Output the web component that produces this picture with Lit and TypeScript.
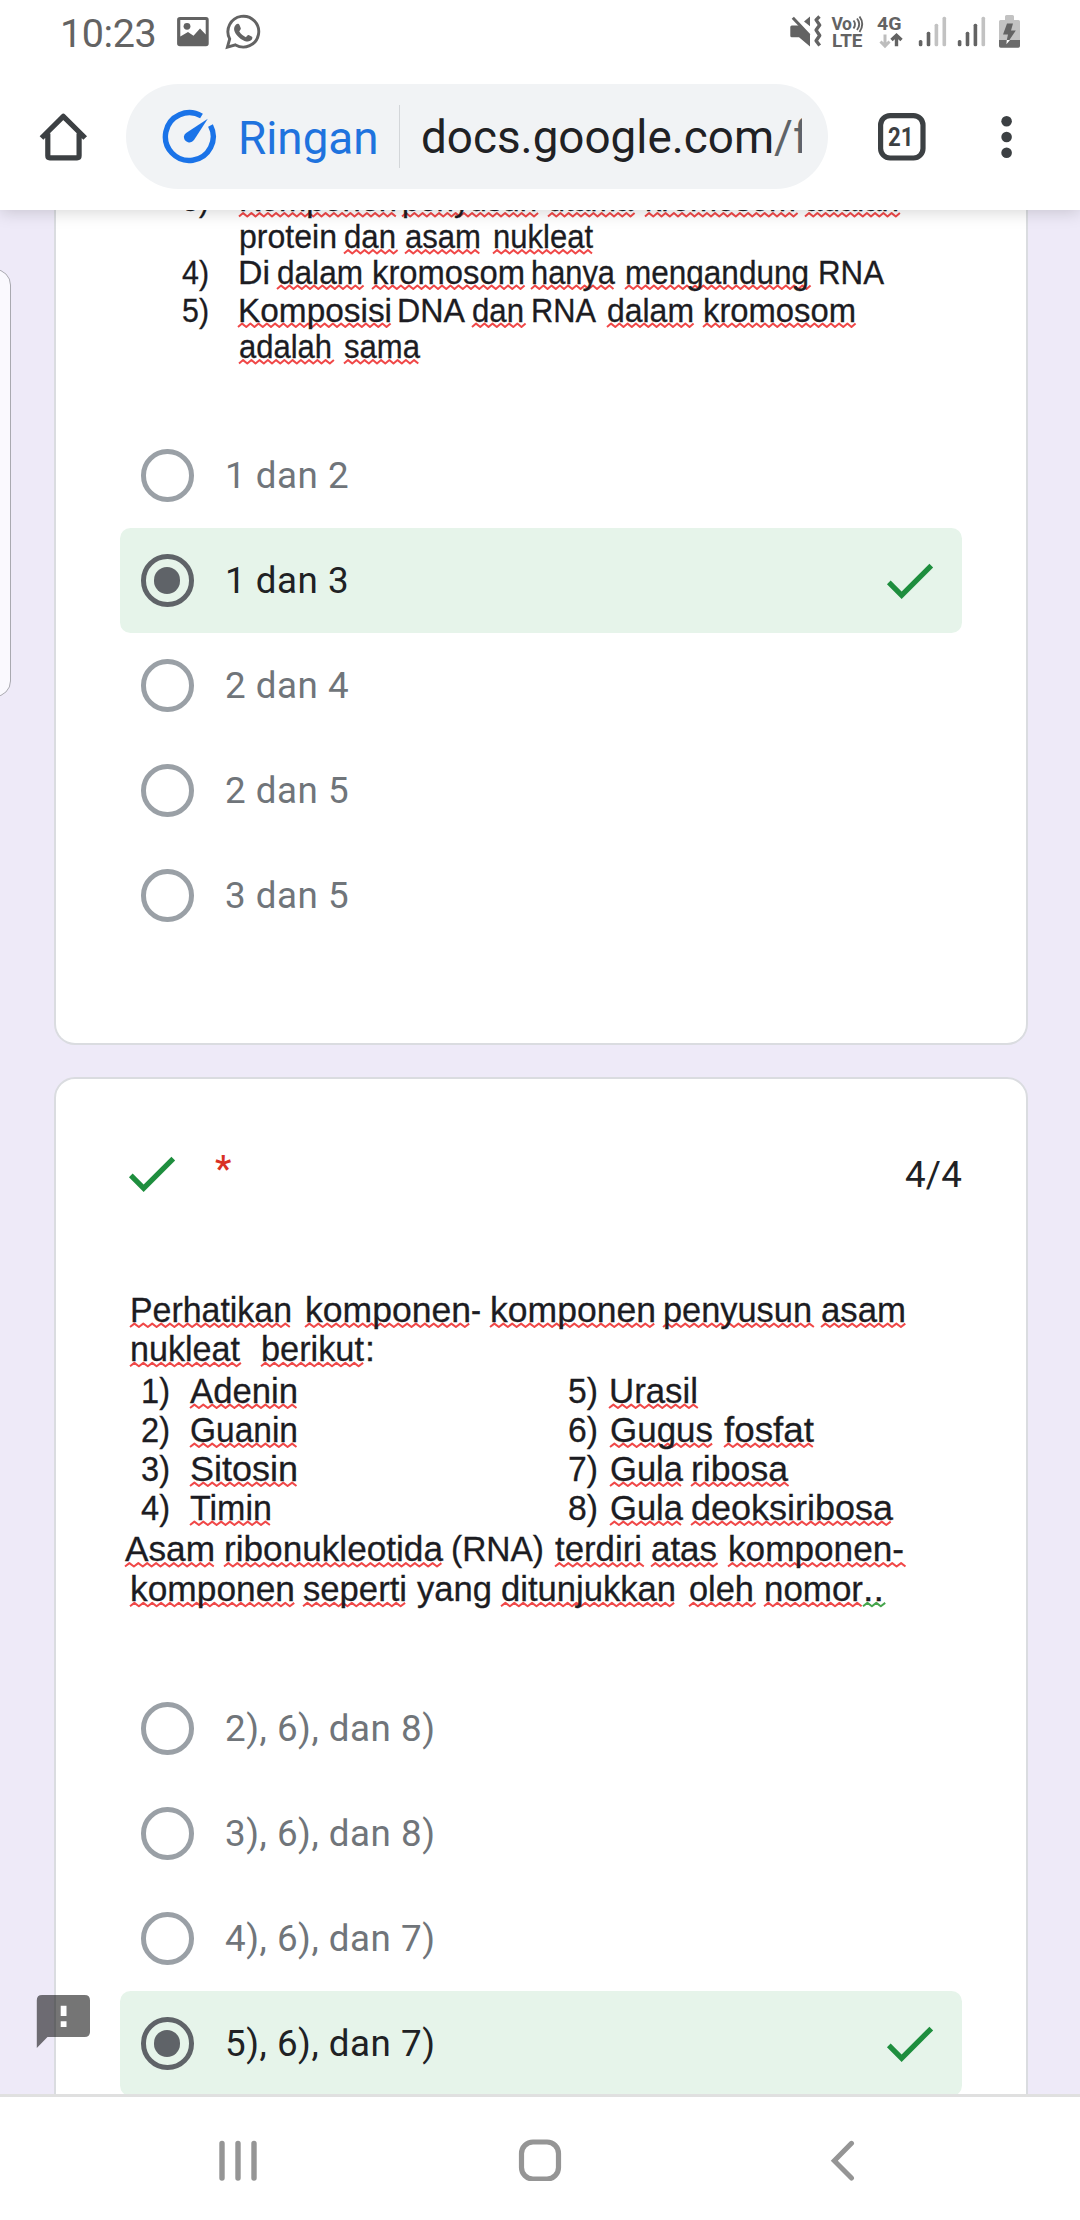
import { LitElement, html, svg, css, nothing } from "lit";
import { customElement, property } from "lit/decorators.js";

type Mark = "" | "r" | "g";
/** x start, x end, text, proofing underline */
type Word = [number, number, string, Mark?];
interface Line {
  y: number;
  words: Word[];
}
interface Option {
  label: string;
  chosen?: boolean;
}

const CHROMOSOME: Line[] = [
  { y: 211, words: [[182, 209, "3)"], [239, 397, "Komponen", "r"], [402, 537, "penyusun", "r"], [548, 633, "utama", "r"], [645, 796, "kromosom", "r"], [805, 899, "adalah", "r"]] },
  { y: 248, words: [[239, 337, "protein"], [344, 396, "dan", "r"], [405, 481, "asam", "r"], [493, 593, "nukleat", "r"]] },
  { y: 283.5, words: [[182, 209, "4)"], [238, 270, "Di"], [277, 363, "dalam", "r"], [372, 525, "kromosom", "r"], [531, 615, "hanya", "r"], [625, 809, "mengandung", "r"], [818, 884, "RNA"]] },
  { y: 321.5, words: [[182, 209, "5)"], [238, 392, "Komposisi", "r"], [397, 465, "DNA"], [472, 524, "dan", "r"], [531, 596, "RNA"], [607, 694, "dalam", "r"], [703, 856, "kromosom", "r"]] },
  { y: 358, words: [[239, 332, "adalah", "r"], [344, 420, "sama", "r"]] },
];

const NUCLEIC: Line[] = [
  { y: 1321.5, words: [[130, 292, "Perhatikan", "r"], [305, 471, "komponen", "r"], [471, 481, "-"], [490, 656, "komponen", "r"], [663, 812, "penyusun", "r"], [821, 906, "asam", "r"]] },
  { y: 1360.8, words: [[130, 240, "nukleat", "r"], [261, 364, "berikut", "r"], [365, 375, ":"]] },
  { y: 1402.5, words: [[141, 170, "1)"], [190, 298, "Adenin", "r"], [568, 598, "5)"], [609, 698, "Urasil", "r"]] },
  { y: 1441.5, words: [[141, 170, "2)"], [190, 298, "Guanin", "r"], [568, 598, "6)"], [610, 713, "Gugus", "r"], [724, 814, "fosfat", "r"]] },
  { y: 1480.5, words: [[141, 170, "3)"], [190, 298, "Sitosin", "r"], [568, 598, "7)"], [610, 683, "Gula", "r"], [691, 788, "ribosa", "r"]] },
  { y: 1519.5, words: [[141, 170, "4)"], [190, 272, "Timin", "r"], [568, 598, "8)"], [610, 683, "Gula", "r"], [691, 893, "deoksiribosa", "r"]] },
  { y: 1561, words: [[125, 215, "Asam", "r"], [224, 443, "ribonukleotida", "r"], [451, 544, "(RNA)"], [555, 642, "terdiri", "r"], [651, 717, "atas", "r"], [728, 904, "komponen-", "r"]] },
  { y: 1600.8, words: [[130, 295, "komponen", "r"], [303, 407, "seperti", "r"], [417, 492, "yang"], [501, 676, "ditunjukkan", "r"], [689, 754, "oleh", "r"], [764, 863, "nomor", "r"], [863, 884, "..", "g"]] },
];

const FIRST: Option[] = [
  { label: "1 dan 2" },
  { label: "1 dan 3", chosen: true },
  { label: "2 dan 4" },
  { label: "2 dan 5" },
  { label: "3 dan 5" },
];
const SECOND: Option[] = [
  { label: "2), 6), dan 8)" },
  { label: "3), 6), dan 8)" },
  { label: "4), 6), dan 7)" },
  { label: "5), 6), dan 7)", chosen: true },
];

const zigzag = (x1: number, x2: number, y: number, step: number) => {
  let d = `M${x1} ${y + 1.9}`;
  let up = true;
  for (let x = x1 + step; x <= x2 + 2; x += step) {
    d += `L${x.toFixed(1)} ${up ? y - 1.5 : y + 1.9}`;
    up = !up;
  }
  return d;
};

const check = html`<svg class="check" width="63" height="63" viewBox="0 0 24 24">
  <path d="M9 16.17 4.83 12l-1.42 1.41L9 19 21 7l-1.41-1.41z" fill="#1e8e3e" />
</svg>`;

/** Scanned passage: words set at their typeset positions with spell-check underlines. */
@customElement("word-figure")
class WordFigure extends LitElement {
  @property({ attribute: false }) lines: Line[] = [];
  @property({ type: Number }) top = 0;
  @property({ type: Number }) h = 0;
  @property({ type: Number }) size = 33;

  static styles = css`
    :host { display: block; }
    svg { display: block; }
    text { font-family: "Liberation Sans", Arial, sans-serif; fill: #1c1c22; stroke: #1c1c22; stroke-width: 0.3; }
    .r { stroke: #f04848; }
    .g { stroke: #46a54c; }
    path { fill: none; stroke-width: 2; stroke-linejoin: round; }
  `;

  render() {
    return html`<svg width="970" height=${this.h} viewBox="56 ${this.top} 970 ${this.h}">
      ${this.lines.map((l) => l.words.map(([a, b, t, m]) => svg`
        ${m ? svg`<path class=${m} d=${zigzag(a, b, l.y + 3.6, this.size / 8)} />` : nothing}
        <text x=${a} y=${l.y} font-size=${this.size} textLength=${b - a} lengthAdjust="spacingAndGlyphs">${t}</text>`))}
    </svg>`;
  }
}

@customElement("option-list")
class OptionList extends LitElement {
  @property({ attribute: false }) options: Option[] = [];

  static styles = css`
    :host { display: block; padding: 0 64px; }
    .row {
      display: flex; align-items: center; height: 105px; box-sizing: border-box;
      padding: 0 21px; border-radius: 10.5px; color: #70757a;
      font-size: 36.75px; letter-spacing: 0.53px; white-space: pre;
    }
    .chosen { background: #e6f4ea; color: #202124; }
    .radio {
      width: 52.5px; height: 52.5px; box-sizing: border-box; border: 5.25px solid #9aa0a6;
      border-radius: 50%; display: flex; align-items: center; justify-content: center;
      margin-right: 31.5px; flex: none;
    }
    .chosen .radio { border-color: #5f6368; }
    .dot { width: 26.25px; height: 26.25px; border-radius: 50%; background: #5f6368; }
    .label { flex: 1; }
    .check { flex: none; }
  `;

  render() {
    return this.options.map((o) => html`<div class="row ${o.chosen ? "chosen" : ""}">
      <span class="radio">${o.chosen ? html`<span class="dot"></span>` : nothing}</span>
      <span class="label">${o.label}</span>
      ${o.chosen ? check : nothing}
    </div>`);
  }
}

@customElement("status-bar")
class StatusBar extends LitElement {
  static styles = css`
    :host { display: flex; height: 84px; box-sizing: border-box; padding: 0 58px 0 60px; color: #636363; }
    .time { font-size: 39.5px; line-height: 67px; width: 115px; letter-spacing: -0.4px; }
    svg { display: block; }
    .left { flex: 1; }
    text { font-family: Roboto, sans-serif; font-weight: 700; fill: #636363; }
  `;

  private bars(x: number, on: number) {
    const tops = [40, 31.7, 23.7, 16.7];
    return tops.map((t, i) => svg`<rect x=${x + i * 7.9} y=${t} width="3.6" height=${46.3 - t} rx="1.5" fill=${i < on ? "#636363" : "#c2c2c2"} />`);
  }

  render() {
    return html`<div class="time">10:23</div>
      <svg class="left" width="100" height="60" viewBox="175 0 100 60" preserveAspectRatio="xMinYMin">
        <path fill="#636363" fill-rule="evenodd" d="M180 17h26q2.700 0 2.700 2.700V43.500q0 2.700-2.700 2.700H180q-2.900 0-2.900-2.700V19.700q0-2.700 2.900-2.700zM180.300 20V36.500L188 32l5.500 3.800L200 28.500l5.700 6V20z" />
        <circle cx="187" cy="26.300" r="3.400" fill="#636363" />
        <path fill="none" stroke="#636363" stroke-width="2.900" d="M227.400 47.200l2.300-8.400a15.400 15.400 0 1 1 5.800 6.100z" />
        <path fill="#636363" d="M236 24.600c1.400-1.300 2.900-.9 3.500.5l1.300 3.200c.4 1-1.100 2.300-1.600 3 1.600 2.900 3.800 4.600 6.700 5.900.9-.9 1.900-2.500 2.800-2.100l3.300 1.700c.7.400.4 2.300-.6 3.300-2.400 2.400-6.300 1.500-10.600-1.200-5.400-3.800-9.200-10-4.800-14.300z" />
      </svg>
      <svg width="232" height="60" viewBox="790 0 232 60">
        <path fill="#636363" d="M790.300 27q0-1.500 1.500-1.500h7.500L810 34.500v12L799 37.300h-7.200q-1.500 0-1.500-1.500z" />
        <path fill="#636363" d="M804 21.500l6-5v9.700z" />
        <path d="M792.800 17.800l16.500 17.500" stroke="#636363" stroke-width="3" />
        <path d="M819.500 16.500l-3.400 3.400 3.600 5.200-3.600 5 3.600 5.400-3.600 5.200 3.600 4.800" fill="none" stroke="#636363" stroke-width="3.400" stroke-linejoin="round" />
        <text x="831.500" y="29.500" font-size="17.500" textLength="20.500">Vo</text>
        <path d="M853.500 20.500q3 3.500 0 8M857 18.500q4.500 5.500 0 11.500M859.500 16.500q5.500 7.500 0 15.500" fill="none" stroke="#636363" stroke-width="1.900" />
        <text x="832" y="47" font-size="18" textLength="30.500" lengthAdjust="spacingAndGlyphs">LTE</text>
        <text x="877" y="30" font-size="19" textLength="24.500" lengthAdjust="spacingAndGlyphs">4G</text>
        <path d="M885 34.500v11M880.500 41.500l4.500 4.700 4.500-4.700" fill="none" stroke="#bdbdbd" stroke-width="3" />
        <path d="M896.500 46.200V35.500M891.500 40l5-4.700 5 4.700" fill="none" stroke="#636363" stroke-width="3.400" />
        ${this.bars(918.800, 2)} ${this.bars(957.800, 3)}
        <path fill="#c2c2c2" d="M1005 16.500q0-1.500 1.500-1.500h6q1.500 0 1.500 1.500V20h4.500q1.500 0 1.500 1.500V41H999V21.500q0-1.500 1.500-1.500h4.500z" />
        <path fill="#6a6a6a" d="M999 40h21v6q0 1.700-1.700 1.700h-17.600q-1.700 0-1.700-1.700z" />
        <path fill="#636363" d="M1007 23.500h6l-2 7h4.800l-6.400 9.500h-2.600l1.200-5.500h-5z" />
        <path fill="#fff" d="M1006.800 40h3.200l-3.600 4.200z" />
      </svg>`;
  }
}

@customElement("browser-bar")
class BrowserBar extends LitElement {
  static styles = css`
    :host { display: flex; align-items: center; height: 105px; padding: 0 60px 21px 39px; }
    svg { display: block; flex: none; }
    .pill {
      margin-left: 38px; width: 702px; height: 105px; box-sizing: border-box; border-radius: 52.5px;
      background: #f1f3f5; display: flex; align-items: center; padding: 0 26px 0 36px;
      font-size: 45.8px; white-space: pre;
    }
    .lite { color: #1f73de; margin-left: 20px; width: 161px; padding-top: 3px; }
    .sep { width: 1px; height: 63px; background: #d3d6d9; margin-right: 21px; flex: none; }
    .url { color: #202124; flex: 1; overflow: hidden; line-height: 60px; padding-top: 3px; }
    .path { color: #5f6368; }
    .tabs { margin-left: 50px; }
    .menu { margin-left: 75px; }
    .count { font: 700 26px Roboto, sans-serif; fill: #3c4043; }
  `;

  render() {
    return html`
      <svg width="49" height="50" viewBox="39 111.500 49 50">
        <path d="M41.500 137.500L63.300 115.800 85.200 137.500M47.800 133v22.300q0 2 2 2h27.300q2 0 2-2V133" fill="none" stroke="#3c4043" stroke-width="5.200" stroke-linejoin="round" />
      </svg>
      <div class="pill">
        <svg width="56" height="56" viewBox="162 108.500 56 56">
          <path d="M201.500 115.500A23.900 23.900 0 1 0 210.500 125" fill="none" stroke="#1a73e8" stroke-width="5.400" />
          <path d="M207.800 118.300L194 139.500q-2.400 3.200-6 2.200-4.400-1.700-4.100-5.700.3-2 2.200-3.400z" fill="#1a73e8" />
        </svg>
        <span class="lite">Ringan</span>
        <span class="sep"></span>
        <span class="url">docs.google.com<span class="path">/f</span></span>
      </div>
      <svg class="tabs" width="48" height="48" viewBox="0 0 48 48">
        <rect x="2.600" y="2.600" width="42.400" height="42.400" rx="9.500" fill="none" stroke="#3c4043" stroke-width="5.200" />
        <text class="count" x="10" y="32.800" textLength="25.500" lengthAdjust="spacingAndGlyphs">21</text>
      </svg>
      <svg class="menu" width="12" height="48" viewBox="0 0 12 48" fill="#3c4043">
        <circle cx="5.600" cy="8.200" r="5.300" /><circle cx="5.600" cy="24" r="5.300" /><circle cx="5.600" cy="39.800" r="5.300" />
      </svg>`;
  }
}

@customElement("nav-bar")
class NavBar extends LitElement {
  static styles = css`
    :host { display: flex; align-items: center; justify-content: space-between; height: 123px; box-sizing: content-box; padding: 0 216px; border-top: 3px solid #e0e0e0; }
    svg { display: block; }
  `;
  render() {
    return html`
      <svg width="44" height="44" viewBox="216 2136.500 44 44">
        <path d="M222 2143v34.500M238 2143v34.500M254 2143v34.500" stroke="#959595" stroke-width="5.400" stroke-linecap="round" />
      </svg>
      <svg width="44" height="44" viewBox="518 2136.500 44 44">
        <rect x="521.500" y="2141.500" width="37" height="37" rx="11.500" fill="none" stroke="#959595" stroke-width="5.200" />
      </svg>
      <svg width="44" height="44" viewBox="820 2136.500 44 44">
        <path d="M851.500 2142.800L834.300 2160.200 851.500 2177.500" fill="none" stroke="#959595" stroke-width="5" stroke-linecap="round" />
      </svg>`;
  }
}

@customElement("app-root")
class AppRoot extends LitElement {
  static styles = css`
    :host {
      display: flex; flex-direction: column; width: 1080px; height: 2220px; overflow: hidden;
      background: #fff; font-family: Roboto, sans-serif;
    }
    .chrome { flex: none; position: relative; z-index: 2; background: #fff; box-shadow: 0 2px 16px rgba(0, 0, 0, 0.17); }
    main {
      flex: 1; min-height: 0; overflow: hidden; position: relative; background: #eeeaf8;
      display: flex; flex-direction: column; gap: 32px; padding: 0 52px 0 54px;
    }
    .card { flex: none; box-sizing: border-box; background: #fff; border: 2px solid #dadce0; border-radius: 21px; }
    .first { border-top: 0; border-radius: 0 0 21px 21px; padding-bottom: 95px; }
    .second { height: 1200px; }
    .head { display: flex; align-items: flex-start; padding: 63px 64px 0; height: 201px; box-sizing: border-box; font-size: 36.75px; }
    .star { color: #d93025; margin-left: 32px; line-height: 53px; flex: 1; font-weight: 500; }
    .score { color: #202124; line-height: 66px; letter-spacing: 0.2px; }
    .tray {
      position: absolute; left: -40px; top: 59px; width: 51px; height: 428px; box-sizing: border-box;
      border: 1px solid #a9a9b0; border-radius: 16px; background: #faf9fe;
    }
    .report { position: absolute; left: 36px; top: 1784px; }
    nav-bar { flex: none; }
  `;

  render() {
    return html`
      <div class="chrome"><status-bar></status-bar><browser-bar></browser-bar></div>
      <main>
        <section class="card first">
          <word-figure .lines=${CHROMOSOME} .top=${210} .h=${213} .size=${33}></word-figure>
          <option-list .options=${FIRST}></option-list>
        </section>
        <section class="card second">
          <div class="head">${check}<span class="star">*</span><span class="score">4/4</span></div>
          <word-figure .lines=${NUCLEIC} .top=${1280} .h=${396} .size=${35.5}></word-figure>
          <option-list .options=${SECOND}></option-list>
        </section>
        <div class="tray"></div>
        <svg class="report" width="56" height="56" viewBox="36 1994 56 56">
          <path d="M42 1995H84.700q5.300 0 5.300 5.300V2031.700q0 5.300-5.300 5.300H47.500L36.800 2048V2000.300q0-5.300 5.200-5.300z" fill="#000" fill-opacity="0.54" />
          <path d="M60.700 2005.700h5.800v10.400h-5.800zM60.700 2021.300h5.800v5.700h-5.800z" fill="#fff" />
        </svg>
      </main>
      <nav-bar></nav-bar>`;
  }
}
